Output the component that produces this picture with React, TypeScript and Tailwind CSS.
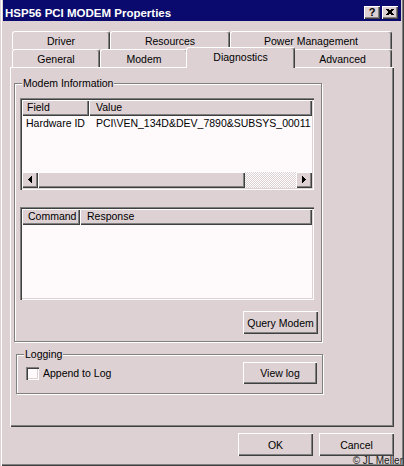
import React from 'react'

const raised = 'bg-[#ddd1d3] shadow-[inset_1px_1px_0_#fff,inset_-1px_-1px_0_#404040,inset_-2px_-2px_0_#808080]'
const sunken = 'shadow-[inset_1px_1px_0_#808080,inset_2px_2px_0_#404040,inset_-1px_-1px_0_#fff,inset_-2px_-2px_0_#ddd1d3]'
const etched = 'border border-[#808080] shadow-[inset_1px_1px_0_#fff,1px_1px_0_#fff]'

function Tab({ label, w, active }: { label: string; w: string; active?: boolean }) {
  return (
    <div
      className={`${w} shrink-0 rounded-t-[3px] border-l border-r border-t border-l-white border-r-[#404040] border-t-white bg-[#ddd1d3] pt-[1px] text-center leading-[17px] whitespace-nowrap shadow-[inset_-1px_0_0_#808080] ${
        active ? 'relative z-10 -mx-[2px] -mt-[2px] h-[21px]' : 'h-[18px]'
      }`}
    >
      {label}
    </div>
  )
}

function Button({ label, w, h }: { label: string; w: string; h: string }) {
  return (
    <div className={`${w} ${h} ${raised} flex shrink-0 items-center justify-center leading-[12px]`}>
      {label}
    </div>
  )
}

function Arrow({ dir }: { dir: 'left' | 'right' }) {
  const cols = dir === 'left' ? [[6, 7, 1], [7, 6, 3], [8, 5, 5], [9, 4, 7]] : [[6, 4, 7], [7, 5, 5], [8, 6, 3], [9, 7, 1]]
  return (
    <div className={`${raised} h-[16px] w-[16px] shrink-0`}>
      <svg width="16" height="16" viewBox="0 0 16 16" shapeRendering="crispEdges">
        {cols.map(([x, y, h]) => (
          <rect key={x} x={x} y={y} width="1" height={h} fill="#000" />
        ))}
      </svg>
    </div>
  )
}

function Header({ cols }: { cols: { label: string; w: string; pl: string }[] }) {
  return (
    <div className="flex h-[16px] shrink-0">
      {cols.map((c) => (
        <div key={c.label} className={`${c.w} ${c.pl} ${raised} h-[16px] leading-[15px] whitespace-nowrap`}>
          {c.label}
        </div>
      ))}
    </div>
  )
}

function TitleBar() {
  return (
    <div className="flex h-[21px] shrink-0 items-start justify-between bg-[#0a0a6e] pl-[2px] pr-[3px]">
      <span className="mt-[6px] text-[11.5px] font-bold leading-[14px] text-white">HSP56 PCI MODEM Properties</span>
      <div className="mt-[6px] flex gap-[2px]">
        <div className={`${raised} flex h-[13px] w-[16px] items-center justify-center text-[11px] font-bold leading-[11px]`}>?</div>
        <div className={`${raised} flex h-[13px] w-[16px] items-center justify-center`}>
          <svg width="16" height="13" viewBox="0 0 16 13" shapeRendering="crispEdges">
            <path d="M4.5 3 L10.5 9 M5.5 3 L11.5 9 M10.5 3 L4.5 9 M11.5 3 L5.5 9" stroke="#000" strokeWidth="1" />
          </svg>
        </div>
      </div>
    </div>
  )
}

export default function App() {
  return (
    <div className="relative flex h-[466px] w-[404px] flex-col overflow-hidden bg-[#ddd1d3] px-[3px] font-['Liberation_Sans',Arial,sans-serif] text-[10.5px] text-black shadow-[inset_1px_0_0_#ddd1d3,inset_2px_0_0_#fff,inset_-1px_-1px_0_#404040,inset_-2px_-2px_0_#808080]">
      <TitleBar />
      <div className="flex flex-col px-[7px] pt-[10px]">
        <div className="flex h-[18px] items-start pl-[2px]">
          <Tab w="w-[98px]" label="Driver" />
          <Tab w="w-[120px]" label="Resources" />
          <Tab w="w-[162px]" label="Power Management" />
        </div>
        <div className="flex h-[18px] items-start pl-[2px]">
          <Tab w="w-[88px]" label="General" />
          <Tab w="w-[88px]" label="Modem" />
          <Tab w="w-[109px]" label="Diagnostics" active />
          <Tab w="w-[99px]" label="Advanced" />
        </div>

        <div className="flex h-[360px] flex-col bg-[#ddd1d3] shadow-[inset_1px_1px_0_#fff,inset_-1px_-1px_0_#404040,inset_-2px_-2px_0_#808080]">
          {/* Modem Information */}
          <div className={`${etched} ml-[4px] mt-[16px] flex h-[259px] w-[308px] flex-col`}>
            <span className="-mt-[7px] ml-[7px] w-fit bg-[#ddd1d3] px-[1px] leading-[12px]">Modem Information</span>

            <div className={`${sunken} ml-[5px] mt-[9px] flex h-[92px] w-[294px] flex-col bg-[#fefafc] p-[2px]`}>
              <Header
                cols={[
                  { label: 'Field', w: 'w-[67px]', pl: 'pl-[5px]' },
                  { label: 'Value', w: 'flex-1', pl: 'pl-[7px]' },
                ]}
              />
              <div className="flex h-[14px] leading-[14px] whitespace-nowrap">
                <span className="w-[67px] shrink-0 pl-[4px]">Hardware ID</span>
                <span className="min-w-0 flex-1 overflow-hidden pl-[7px]">PCI\VEN_134D&amp;DEV_7890&amp;SUBSYS_00011</span>
              </div>
              <div className="flex-1" />
              <div className="flex h-[16px] shrink-0">
                <Arrow dir="left" />
                <div className={`${raised} h-[16px] w-[207px] shrink-0`} />
                <div className="h-[16px] flex-1 bg-[image:repeating-conic-gradient(#fff_0_25%,#ddd1d3_0_50%)] bg-[length:2px_2px]" />
                <Arrow dir="right" />
              </div>
            </div>

            <div className={`${sunken} ml-[5px] mt-[17px] flex h-[93px] w-[294px] flex-col bg-[#fefafc] p-[2px]`}>
              <Header
                cols={[
                  { label: 'Command', w: 'w-[58px]', pl: 'pl-[6px]' },
                  { label: 'Response', w: 'flex-1', pl: 'pl-[7px]' },
                ]}
              />
            </div>

            <div className="mr-[3px] mt-[11px] self-end">
              <Button label="Query Modem" w="w-[75px]" h="h-[23px]" />
            </div>
          </div>

          {/* Logging */}
          <div className={`${etched} ml-[6px] mt-[12px] flex h-[40px] w-[307px] flex-col`}>
            <span className="-mt-[7px] ml-[7px] w-fit bg-[#ddd1d3] px-[1px] leading-[12px]">Logging</span>
            <div className="mt-[2px] flex items-center pl-[9px] pr-[5px]">
              <div className={`${sunken} h-[13px] w-[13px] shrink-0 bg-[#fefafc]`} />
              <span className="ml-[4px] leading-[12px]">Append to Log</span>
              <div className="flex-1" />
              <Button label="View log" w="w-[74px]" h="h-[22px]" />
            </div>
          </div>
        </div>

        <div className="mt-[6px] flex justify-end gap-[6px]">
          <Button label="OK" w="w-[75px]" h="h-[23px]" />
          <Button label="Cancel" w="w-[75px]" h="h-[23px]" />
        </div>
      </div>
      <span className="absolute bottom-0 right-[1px] text-[10px] leading-[11px] text-[#1a1a1a]">© JL Meller</span>
    </div>
  )
}
